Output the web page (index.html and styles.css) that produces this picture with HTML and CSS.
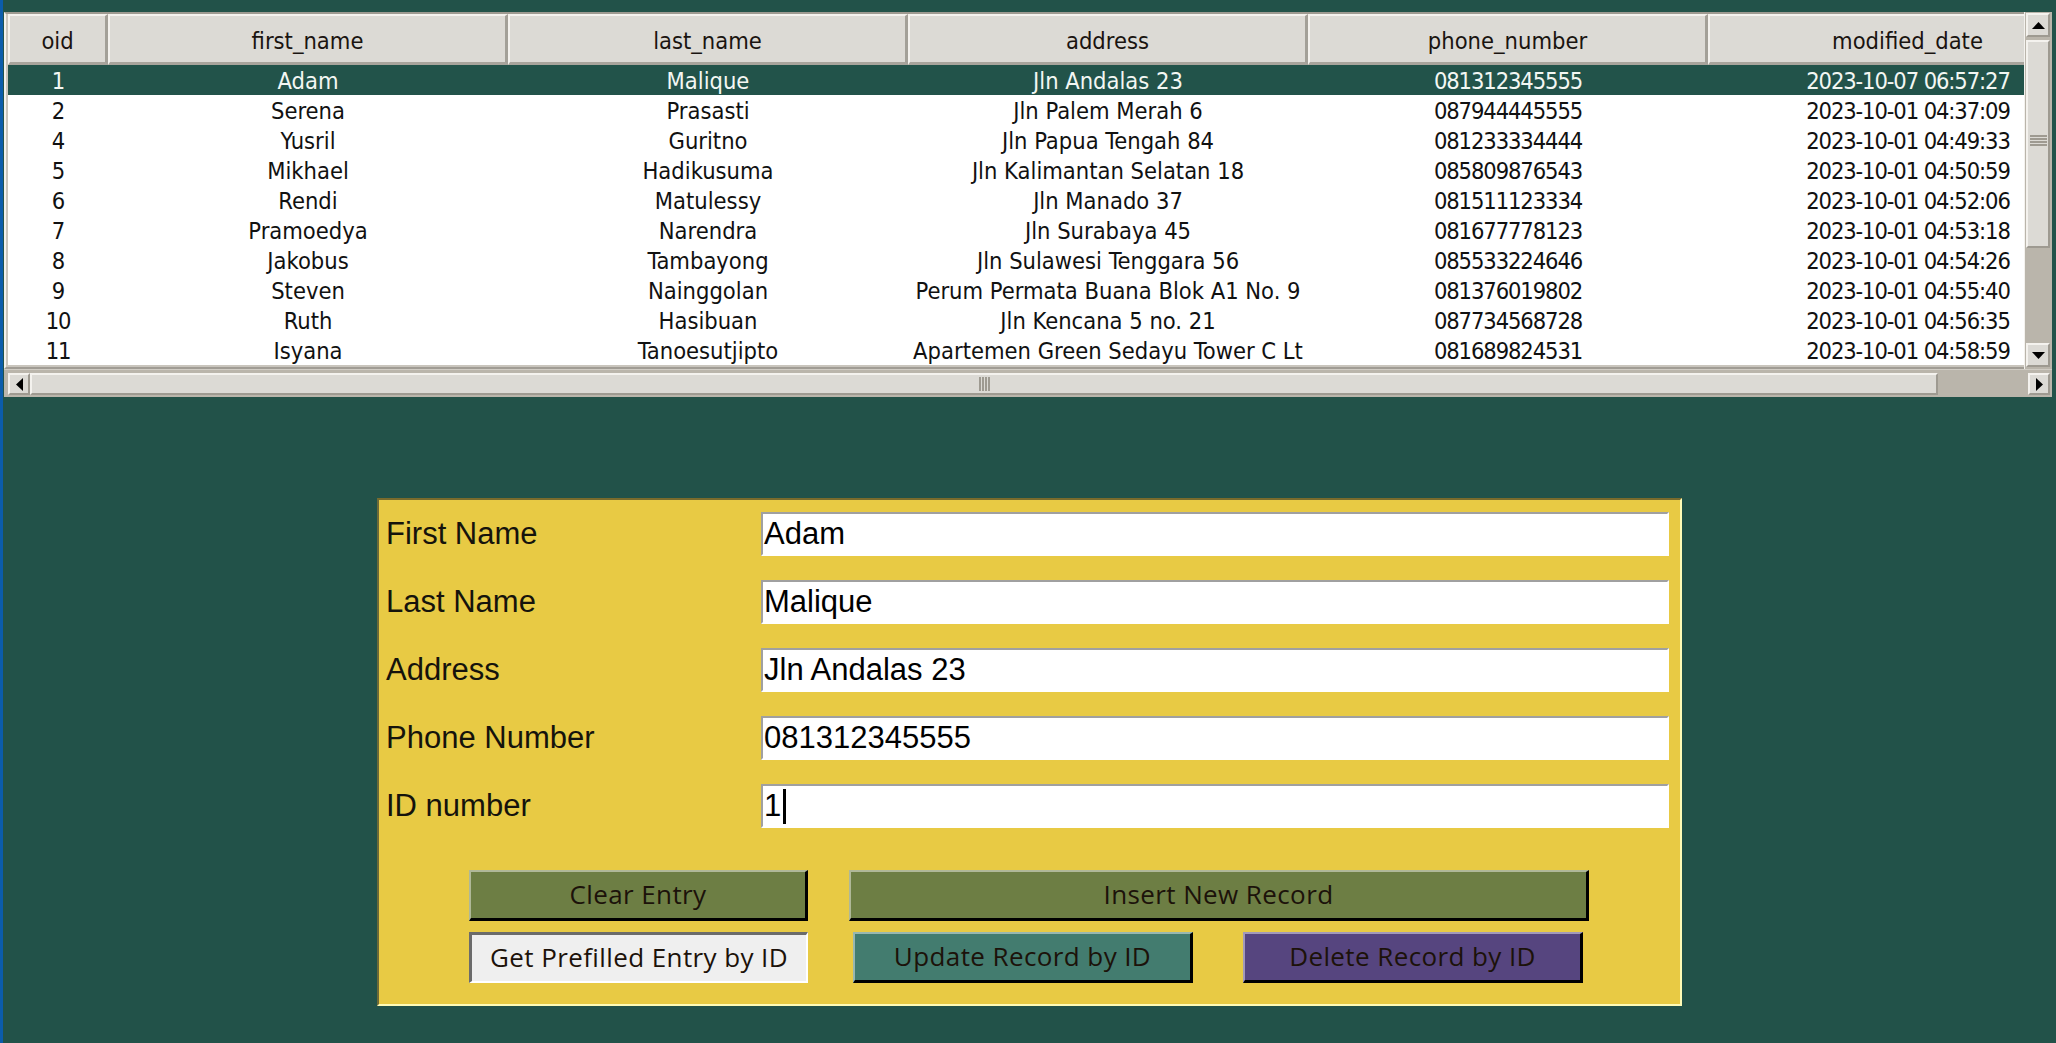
FILE: index.html
```html
<!DOCTYPE html>
<html lang="en">
<head>
<meta charset="utf-8">
<title>Address Book</title>
<link rel="stylesheet" href="styles.css">
</head>
<body>
<div class="app">
  <div class="table-wrap">
    <div class="tree">
      <div class="viewport">
        <div class="row head">
          <div class="hcell">oid</div>
          <div class="hcell">first_name</div>
          <div class="hcell">last_name</div>
          <div class="hcell">address</div>
          <div class="hcell">phone_number</div>
          <div class="hcell">modified_date</div>
        </div>
        <div class="body">
          <div class="row selected"><span class="num">1</span><span>Adam</span><span>Malique</span><span>Jln Andalas 23</span><span class="num">081312345555</span><span class="num">2023-10-07 06:57:27</span></div>
          <div class="row"><span class="num">2</span><span>Serena</span><span>Prasasti</span><span>Jln Palem Merah 6</span><span class="num">087944445555</span><span class="num">2023-10-01 04:37:09</span></div>
          <div class="row"><span class="num">4</span><span>Yusril</span><span>Guritno</span><span>Jln Papua Tengah 84</span><span class="num">081233334444</span><span class="num">2023-10-01 04:49:33</span></div>
          <div class="row"><span class="num">5</span><span>Mikhael</span><span>Hadikusuma</span><span>Jln Kalimantan Selatan 18</span><span class="num">085809876543</span><span class="num">2023-10-01 04:50:59</span></div>
          <div class="row"><span class="num">6</span><span>Rendi</span><span>Matulessy</span><span>Jln Manado 37</span><span class="num">081511123334</span><span class="num">2023-10-01 04:52:06</span></div>
          <div class="row"><span class="num">7</span><span>Pramoedya</span><span>Narendra</span><span>Jln Surabaya 45</span><span class="num">081677778123</span><span class="num">2023-10-01 04:53:18</span></div>
          <div class="row"><span class="num">8</span><span>Jakobus</span><span>Tambayong</span><span>Jln Sulawesi Tenggara 56</span><span class="num">085533224646</span><span class="num">2023-10-01 04:54:26</span></div>
          <div class="row"><span class="num">9</span><span>Steven</span><span>Nainggolan</span><span>Perum Permata Buana Blok A1 No. 9</span><span class="num">081376019802</span><span class="num">2023-10-01 04:55:40</span></div>
          <div class="row"><span class="num">10</span><span>Ruth</span><span>Hasibuan</span><span>Jln Kencana 5 no. 21</span><span class="num">087734568728</span><span class="num">2023-10-01 04:56:35</span></div>
          <div class="row"><span class="num">11</span><span>Isyana</span><span>Tanoesutjipto</span><span>Apartemen Green Sedayu Tower C Lt</span><span class="num">081689824531</span><span class="num">2023-10-01 04:58:59</span></div>
        </div>
      </div>
    </div>
    <div class="vscroll">
      <div class="sbtn vbtn"><svg width="13" height="7" viewBox="0 0 13 7"><polygon points="6.5,0 13,7 0,7" fill="#000"/></svg></div>
      <div class="vthumb"><span class="grip-h"></span></div>
      <div class="vtrough"></div>
      <div class="sbtn vbtn"><svg width="13" height="7" viewBox="0 0 13 7"><polygon points="0,0 13,0 6.5,7" fill="#000"/></svg></div>
    </div>
    <div class="hscroll">
      <div class="sbtn hbtn"><svg width="7" height="13" viewBox="0 0 7 13"><polygon points="7,0 7,13 0,6.5" fill="#000"/></svg></div>
      <div class="hthumb"><span class="grip-v"></span></div>
      <div class="htrough"></div>
      <div class="sbtn hbtn right"><svg width="7" height="13" viewBox="0 0 7 13"><polygon points="0,0 7,6.5 0,13" fill="#000"/></svg></div>
    </div>
  </div>

  <div class="form-panel">
    <div class="fields">
      <div class="label">First Name</div><div class="entry">Adam</div>
      <div class="label">Last Name</div><div class="entry">Malique</div>
      <div class="label">Address</div><div class="entry">Jln Andalas 23</div>
      <div class="label">Phone Number</div><div class="entry">081312345555</div>
      <div class="label">ID number</div><div class="entry">1<span class="caret"></span></div>
    </div>
    <div class="buttons">
      <div class="btn-row">
        <div class="btn olive w-small">Clear Entry</div>
        <div class="btn olive w-large gap-a">Insert New Record</div>
      </div>
      <div class="btn-row second">
        <div class="btn pressed w-small">Get Prefilled Entry by ID</div>
        <div class="btn teal w-mid gap-b">Update Record by ID</div>
        <div class="btn purple w-mid gap-c">Delete Record by ID</div>
      </div>
    </div>
  </div>
</div>
</body>
</html>
```
FILE: styles.css
```css
html, body {
  margin: 0;
  padding: 0;
}
body {
  background: #225249;
  font-family: "Liberation Sans", Arial, sans-serif;
}
.app {
  box-sizing: border-box;
  height: 1043px;
  border-left: 3px solid #0b5cab;
  padding-top: 12px;
  overflow: hidden;
}

/* ---------- table area ---------- */
.table-wrap {
  display: grid;
  grid-template-columns: 2020px 28px;
  grid-template-rows: 357px 28px;
  margin-left: 1px;
  width: 2048px;
}
.tree {
  box-sizing: border-box;
  border-top: 2px solid #9e9a91;
  border-left: 2px solid #f2f0ec;
  border-bottom: 2px solid #a09c94;
  padding: 0 0 2px 2px;
  background: #c9c5bd;
}
.viewport {
  width: 2016px;
  height: 351px;
  overflow: hidden;
  background: #ffffff;
}
.row {
  display: grid;
  grid-template-columns: 100px repeat(5, 400px);
  width: 2100px;
  height: 30px;
  font-family: "Liberation Sans Narrow", "Arial Narrow", "DejaVu Sans Condensed", sans-serif;
  font-size: 23.5px;
  color: #111111;
}
.row > span {
  box-sizing: border-box;
  display: flex;
  align-items: center;
  justify-content: center;
  padding-top: 2px;
  white-space: nowrap;
  overflow: hidden;
}
.row > span.num {
  letter-spacing: -1.1px;
}
.row.selected {
  background: #22534a;
  color: #f3f7f3;
}
.row.head {
  height: 51px;
  background: #dcdad5;
}
.hcell {
  box-sizing: border-box;
  display: flex;
  align-items: center;
  justify-content: center;
  padding-top: 3px;
  border-top: 2px solid #f4f2ee;
  border-left: 2px solid #f4f2ee;
  border-right: 3px solid #a3a098;
  border-bottom: 3px solid #a8a49c;
  color: #1a1410;
  white-space: nowrap;
}
.body {
  height: 300px;
}

/* scrollbars */
.vscroll {
  box-sizing: border-box;
  display: flex;
  flex-direction: column;
  background: #bab5ab;
  border-left: 1px solid #f4f2ee;
  padding: 1px 2px 2px 1px;
}
.sbtn {
  box-sizing: border-box;
  background: #dcdad5;
  border-style: solid;
  border-width: 2px;
  border-color: #f4f2ee #9e9a91 #9e9a91 #f4f2ee;
  display: flex;
  align-items: center;
  justify-content: center;
}
.vbtn {
  height: 24px;
  flex: none;
}
.vthumb {
  box-sizing: border-box;
  margin-top: 3px;
  height: 208px;
  flex: none;
  background: #dcdad5;
  border-style: solid;
  border-width: 2px;
  border-color: #f4f2ee #9e9a91 #9e9a91 #f4f2ee;
  display: flex;
  align-items: center;
  justify-content: center;
}
.grip-h {
  display: block;
  width: 17px;
  height: 11px;
  background: repeating-linear-gradient(to bottom, #9e9a91 0 2px, transparent 2px 3px);
  margin-top: -8px;
}
.vtrough {
  flex: 1;
}
.hscroll {
  grid-column: 1 / 3;
  box-sizing: border-box;
  display: flex;
  background: #bab5ab;
  padding: 3px 2px 2px 4px;
  border-top: 1px solid #d0ccc4;
}
.hbtn {
  width: 22px;
  flex: none;
}
.hbtn.right {
  margin-left: 3px;
}
.hthumb {
  box-sizing: border-box;
  width: 1908px;
  flex: none;
  background: #dcdad5;
  border-style: solid;
  border-width: 2px;
  border-color: #f4f2ee #9e9a91 #9e9a91 #f4f2ee;
  display: flex;
  align-items: center;
  justify-content: center;
}
.grip-v {
  display: block;
  width: 11px;
  height: 14px;
  background: repeating-linear-gradient(to right, #9e9a91 0 2px, transparent 2px 3px);
}
.htrough {
  flex: 1;
}

/* ---------- form panel ---------- */
.form-panel {
  box-sizing: border-box;
  width: 1305px;
  height: 508px;
  margin: 101px auto 0;
  background: #e8ca44;
  border-style: solid;
  border-width: 2px;
  border-color: #7a6b2c #fffbb6 #fffbb6 #6d6a38;
  padding: 12px 11px 0 7px;
}
.fields {
  display: grid;
  grid-template-columns: 375px 908px;
  grid-auto-rows: 44px;
  row-gap: 24px;
}
.label {
  display: flex;
  align-items: center;
  font-size: 31px;
  color: #15130c;
  white-space: nowrap;
}
.entry {
  box-sizing: border-box;
  display: flex;
  align-items: center;
  background: #ffffff;
  border-style: solid;
  border-width: 2px;
  border-color: #a0a0a0 #ffffff #ffffff #a0a0a0;
  padding-left: 1px;
  font-size: 31px;
  color: #000000;
  white-space: nowrap;
}
.caret {
  display: inline-block;
  width: 3px;
  height: 35px;
  background: #000000;
  margin-left: 2px;
}
.buttons {
  margin-top: 42px;
  padding-left: 83px;
}
.btn-row {
  display: flex;
}
.btn-row.second {
  margin-top: 11px;
}
.btn {
  box-sizing: border-box;
  height: 51px;
  display: flex;
  align-items: center;
  justify-content: center;
  padding-bottom: 2px;
  font-family: "Open Sans", "Noto Sans", sans-serif;
  font-size: 26px;
  letter-spacing: 0.4px;
  color: #1c120a;
  border-style: solid;
  border-width: 2px 3px 3px 2px;
  border-color: rgba(255,255,255,0.45) #000 #000 rgba(255,255,255,0.45);
  white-space: nowrap;
}
.w-small { width: 339px; }
.w-large { width: 740px; }
.w-mid { width: 340px; }
.gap-a { margin-left: 41px; }
.gap-b { margin-left: 45px; }
.gap-c { margin-left: 50px; }
.olive { background: #6d7e44; }
.teal { background: #437c6f; }
.purple { background: #56457f; }
.pressed {
  background: #efefef;
  border-width: 3px 2px 2px 3px;
  border-color: #6b6b6b #ffffff #ffffff #6b6b6b;
}
```
